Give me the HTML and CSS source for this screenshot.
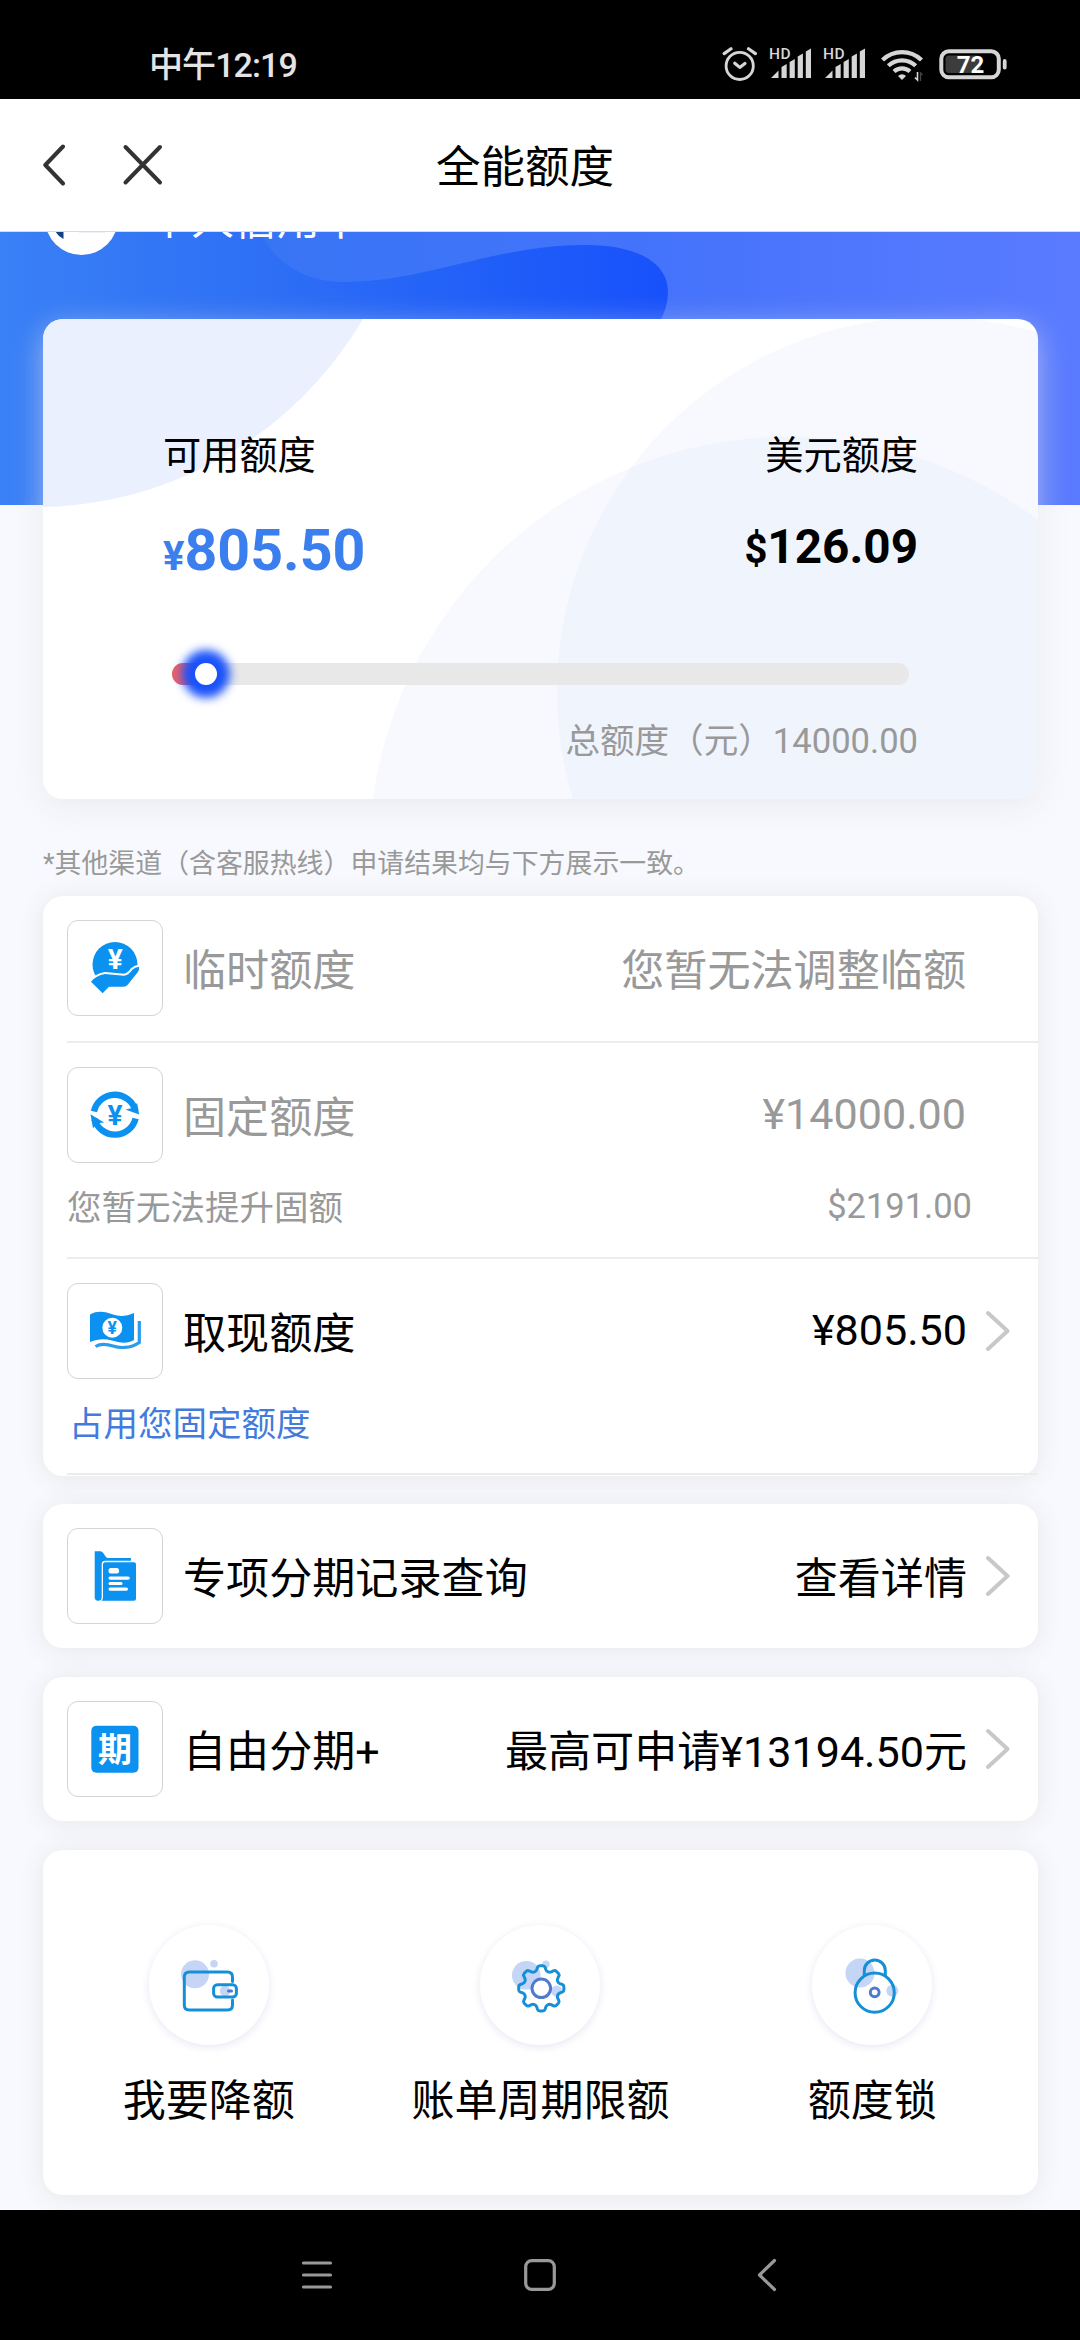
FILE: index.html
```html
<!DOCTYPE html>
<html lang="zh-CN">
<head>
<meta charset="utf-8">
<title>全能额度</title>
<link rel="stylesheet" href="styles.css">
</head>
<body>
<header class="status">
  <span class="clock">中午12:19</span>
  <div class="status-icons">
    <svg class="alarm" width="36" height="40" viewBox="0 0 36 40" fill="none" stroke="#d6d6d6" stroke-width="3.2" stroke-linecap="round" stroke-linejoin="round"><circle cx="17.7" cy="20.9" r="13.6" stroke-width="2.8"/><path d="M2.2 8.6 9 3.8M26.5 3.8 33.4 8.6M12.8 18.2l4.9 4.2 5.2-4"/></svg>
    <svg class="signal" width="42" height="40" viewBox="0 0 42 40" fill="#d6d6d6"><text class="hd" x="-1" y="14">HD</text><path d="M1 33l7.5-7.500V33zM11.500 22l5.200-3v14h-5.200zM19.600 17l5.200-3v19h-5.200zM27.700 11.500l5.200-3V33h-5.200zM35.800 6.500l5.200-3V33h-5.200z"/></svg>
    <svg class="signal" width="42" height="40" viewBox="0 0 42 40" fill="#d6d6d6"><text class="hd" x="-1" y="14">HD</text><path d="M1 33l7.500-7.500V33zM11.500 22l5.200-3v14h-5.200zM19.600 17l5.200-3v19h-5.200zM27.700 11.500l5.200-3V33h-5.200zM35.800 6.500l5.200-3V33h-5.200z"/></svg>
    <svg class="wifi" width="44" height="40" viewBox="0 0 44 40" fill="none" stroke="#d6d6d6" stroke-width="4.300"><path d="M1.500 15a28 28 0 0 1 39 0M7.300 20.800a20 20 0 0 1 27.400 0M13 26.500a12 12 0 0 1 16 0"/><path d="M17 31a5.600 5.600 0 0 1 8 0l-4 4z" fill="#d6d6d6" stroke="none"/><path d="M36.500 27v8l-2.500-2.500" stroke-width="1.600"/><path d="M39.500 36v-8l2 2" stroke="#444" stroke-width="1.400"/></svg>
    <svg class="battery" width="69" height="40" viewBox="0 0 69 40"><rect x="2.300" y="6.300" width="57.500" height="26" rx="7.500" fill="none" stroke="#d6d6d6" stroke-width="4"/><rect x="6.500" y="10.500" width="35" height="17.500" rx="3.500" fill="#3c3c3c"/><rect x="63.800" y="14" width="3.800" height="10.500" rx="1.900" fill="#d6d6d6"/><text class="level" x="31.500" y="28">72</text></svg>
  </div>
</header>
<nav class="titlebar">
  <svg width="24" height="44" viewBox="0 0 24 44" fill="none" stroke="#333" stroke-width="4" stroke-linecap="round" stroke-linejoin="round"><path d="M22 3.500 4.300 22 22 40.500"/></svg>
  <svg width="44" height="44" viewBox="0 0 44 44" fill="none" stroke="#333" stroke-width="4" stroke-linecap="round"><path d="M4.500 4 39 39.500M39 4 4.500 39.500"/></svg>
  <h1 class="title">全能额度</h1>
</nav>
<main class="page">
  <section class="hero">
    <svg class="hero-bg" width="1080" height="273" viewBox="0 0 1080 273">
      <defs>
        <linearGradient id="sky"><stop offset="0" stop-color="#3a80f6"/><stop offset=".25" stop-color="#3875f5"/><stop offset=".6" stop-color="#4473fb"/><stop offset="1" stop-color="#5a7bff"/></linearGradient>
        <linearGradient id="wave"><stop offset="0" stop-color="#3a80f6"/><stop offset=".4" stop-color="#2e6ff5"/><stop offset=".8" stop-color="#1e5bf9"/><stop offset="1" stop-color="#1851fb"/></linearGradient>
      </defs>
      <rect width="1080" height="273" fill="url(#sky)"/>
      <path d="M0 0H260C278 36 310 50 344 50 425 50 495 13 585 13 638 13 668 31 668 60 668 90 640 120 620 140L0 273z" fill="url(#wave)"/>
    </svg>
    <div class="profile">
      <div class="avatar"><svg width="73" height="73" viewBox="0 0 73 73"><path d="M10 48.500h8.500V57q-6-3-8.500-8.500z" fill="#0f4484"/><path d="M34 50.200h26" stroke="#e6ecf5" stroke-width="1"/></svg></div>
      <span>个人信用卡</span>
    </div>
  </section>

  <section class="quota">
    <svg class="quota-bg" width="995" height="480" viewBox="43 319 995 480">
      <rect x="43" y="319" width="995" height="480" fill="#fff"/>
      <circle cx="35" cy="127" r="380" fill="#eaf0fe"/>
      <g fill="#d4dffc" fill-opacity=".18"><circle cx="931" cy="691" r="374"/><circle cx="788" cy="856" r="419"/></g>
    </svg>
    <div class="pair names"><span>可用额度</span><span>美元额度</span></div>
    <div class="pair sums">
      <div class="cny"><small>¥</small>805.50</div>
      <div class="usd"><small>$</small>126.09</div>
    </div>
    <div class="slider"><div class="used"></div><div class="knob"></div></div>
    <p class="total">总额度（元）14000.00</p>
  </section>

  <p class="note">*其他渠道（含客服热线）申请结果均与下方展示一致。</p>

  <section class="card list">
    <div class="row muted">
      <div class="line">
        <div class="ico"><svg width="96" height="96" viewBox="0 0 96 96" fill="#0b91ef"><circle cx="48" cy="44.500" r="22.500"/><path d="M24 61.700Q29 55.500 38 54l19 1.700q4 0 8.600-6.200Q69 46.500 72 47q.500 3-1.300 5.200L60.500 65q-1.500 1.800-3.800 1.800H42l-6.400 6.500z" stroke="#fff" stroke-width="4" paint-order="stroke"/><text class="yen" x="48.300" y="49" font-size="28" fill="#fff">¥</text></svg></div>
        <span class="label">临时额度</span><span class="value han">您暂无法调整临额</span>
      </div>
    </div>
    <div class="row muted">
      <div class="line">
        <div class="ico"><svg width="96" height="96" viewBox="0 0 96 96" fill="none" stroke="#0b91ef" stroke-width="6.400"><path d="M27 44.500a21.300 21.300 0 0 1 41.500-.500M68.600 51.500a21.300 21.300 0 0 1-41.200.500"/><path d="M58.500 42.500l6.800-1.500 4.800-5 2 11.500zM37 55.500l-7 .800-4 5-2.500-14z" fill="#0b91ef" stroke="none"/><text class="yen" x="48" y="58.300" font-size="28" fill="#0b91ef" stroke="none">¥</text></svg></div>
        <span class="label">固定额度</span><span class="value">¥14000.00</span>
      </div>
      <div class="sub"><span>您暂无法提升固额</span><span class="dollar">$2191.00</span></div>
    </div>
    <div class="row">
      <div class="line">
        <div class="ico"><svg width="96" height="96" viewBox="0 0 96 96"><path d="M23 31.500C31 27 39 29 46 31.500S60 33 67 30v27c-7 4.500-15 2.500-22 .500s-14-2-22 1.500z" fill="#0b91ef"/><path d="M28.500 63.500C34 60 40 61 46 63s17 3 26.300-3.500V38" fill="none" stroke="#2a9ceb" stroke-width="3.200"/><circle cx="45.300" cy="44.700" r="10" fill="#fff"/><text class="yen" x="45.300" y="51" font-size="17.500" fill="#0b91ef">¥</text></svg></div>
        <span class="label">取现额度</span><span class="value">¥805.50</span>
        <svg class="more" width="26" height="42" viewBox="0 0 26 42"><path d="M4 3 23.500 21 4 39"/></svg>
      </div>
      <div class="sub blue"><span>占用您固定额度</span></div>
    </div>
  </section>

  <section class="card single">
    <div class="line">
      <div class="ico"><svg width="96" height="96" viewBox="0 0 96 96" fill="#0b91ef"><path d="M27.700 23.300h5.800q1.500 0 2.500 1.500l2.800 4q.800 1.300 2.500 1.300h22.600v2.700H38q-3.300 0-3.300 3.500V69.500q-.300 3.200-3.500 3.200t-3.500-3.200z"/><path d="M38 34.300h29q2 0 2 2v34.400q0 2-2 2H34.500q1.500-1.500 1.500-3.500V36.300q0-2 2-2z"/><g fill="#fff"><rect x="41.500" y="40" width="10.600" height="5.400" rx="2.500"/><rect x="41.500" y="48.500" width="21.300" height="3.200" rx="1.600"/><rect x="41.500" y="54" width="14" height="3" rx="1.500"/><rect x="41.500" y="59.500" width="19.500" height="3.200" rx="1.600"/></g></svg></div>
      <span class="label">专项分期记录查询</span><span class="value han">查看详情</span>
      <svg class="more" width="26" height="42" viewBox="0 0 26 42"><path d="M4 3 23.500 21 4 39"/></svg>
    </div>
  </section>

  <section class="card single">
    <div class="line">
      <div class="ico"><svg width="96" height="96" viewBox="0 0 96 96"><rect x="24.300" y="24.700" width="47.200" height="47" rx="5" fill="#0b91ef"/><text class="qi" x="48" y="61">期</text></svg></div>
      <span class="label">自由分期+</span><span class="value han">最高可申请¥13194.50元</span>
      <svg class="more" width="26" height="42" viewBox="0 0 26 42"><path d="M4 3 23.500 21 4 39"/></svg>
    </div>
  </section>

  <section class="card actions">
    <div class="action">
      <svg class="disc" width="120" height="120" viewBox="0 0 120 120" fill="none" stroke="#1590d8" stroke-width="3" stroke-linecap="round"><g fill="#c5d5f6" stroke="none"><circle cx="46" cy="49.300" r="14"/><circle cx="65" cy="38.700" r="3.800"/><circle cx="76" cy="66" r="5.200"/></g><path d="M83.500 56.500V52q0-5-5-5H40.300q-5 0-5 5v28q0 5 5 5h38.200q5 0 5-5v-5"/><rect x="64.600" y="59.700" width="22.800" height="12.400" rx="3.800"/><path d="M79.500 66h3" stroke="#4a78cc" stroke-width="3"/></svg>
      <span>我要降额</span>
    </div>
    <div class="action">
      <svg class="disc" width="120" height="120" viewBox="0 0 120 120" fill="none" stroke="#1590d8" stroke-width="3" stroke-linejoin="round"><g fill="#c5d5f6" stroke="none"><circle cx="46.300" cy="50.300" r="14.300"/><circle cx="66" cy="39.300" r="3.700"/><circle cx="76.600" cy="66" r="5.500"/></g><g transform="translate(61.300 63.300)"><path d="M-4.600-18.600-3.800-21Q-3.200-22.600-1.500-22.600H1.500Q3.200-22.600 3.800-21L4.600-18.600A4 4 0 0 0 9.900-16.400L12.200-17.500Q13.700-18.200 14.900-17.100L17.100-14.900Q18.200-13.700 17.500-12.200L16.400-9.900A4 4 0 0 0 18.600-4.600L21-3.800Q22.600-3.200 22.600-1.500V1.500Q22.600 3.200 21 3.800L18.600 4.600A4 4 0 0 0 16.400 9.900L17.500 12.200Q18.200 13.700 17.100 14.900L14.900 17.100Q13.700 18.200 12.200 17.500L9.900 16.400A4 4 0 0 0 4.600 18.600L3.800 21Q3.200 22.600 1.500 22.600H-1.500Q-3.200 22.600-3.800 21L-4.600 18.600A4 4 0 0 0-9.900 16.400L-12.200 17.500Q-13.700 18.200-14.900 17.100L-17.100 14.900Q-18.200 13.700-17.500 12.200L-16.400 9.900A4 4 0 0 0-18.600 4.600L-21 3.800Q-22.600 3.200-22.600 1.500V-1.500Q-22.600-3.200-21-3.800L-18.600-4.600A4 4 0 0 0-16.400-9.900L-17.500-12.200Q-18.200-13.700-17.100-14.900L-14.900-17.100Q-13.700-18.200-12.200-17.500L-9.900-16.400A4 4 0 0 0-4.600-18.600z"/><circle r="9.300" fill="#fff" stroke="#5079cf"/></g></svg>
      <span>账单周期限额</span>
    </div>
    <div class="action">
      <svg class="disc" width="120" height="120" viewBox="0 0 120 120" fill="none" stroke="#1590d8" stroke-width="3"><g fill="#c5d5f6" stroke="none"><circle cx="48" cy="48" r="14.500"/><circle cx="80.300" cy="65.700" r="6"/></g><path d="M52.300 51.500V45.500a10.500 10.500 0 0 1 21 0v6"/><circle cx="62.700" cy="67.700" r="19.600"/><circle cx="62.700" cy="67.300" r="4.400" stroke="#5079cf"/></svg>
      <span>额度锁</span>
    </div>
  </section>
</main>
<footer class="keys">
  <svg width="34" height="36" viewBox="0 0 34 36"><path d="M3.500 6h27M3.500 18h27M3.500 30h27"/></svg>
  <svg class="home" width="36" height="36" viewBox="0 0 36 36"><rect x="3.700" y="3.700" width="28.600" height="28.600" rx="6"/></svg>
  <svg width="24" height="36" viewBox="0 0 24 36"><path d="M19.500 3.500 4.500 18l15 14.500"/></svg>
</footer>
</body>
</html>
```

FILE: styles.css
```css
* { box-sizing: border-box; }
body {
  margin: 0;
  width: 1080px;
  height: 2340px;
  display: flex;
  flex-direction: column;
  overflow: hidden;
  background: #000;
  color: #000;
  font-family: Roboto, "Noto Sans CJK SC", sans-serif;
}
p, h1 { margin: 0; }
svg { display: block; flex: none; }
small { font-size: 40px; }

.status {
  height: 99px;
  padding: 0 72px 0 149px;
  display: flex;
  justify-content: space-between;
  align-items: flex-start;
  color: #e4e4e4;
}
.clock { margin-top: 45px; font-size: 34px; line-height: 40px; font-weight: 500; letter-spacing: -.9px; }
.status-icons { display: flex; margin-top: 45px; }
.signal { margin-left: 12px; overflow: visible; }
.wifi { margin-left: 15px; }
.battery { margin-left: 14px; }
.hd { font: 500 15.500px Roboto, sans-serif; letter-spacing: .5px; }
.level { font: 700 24px Roboto, sans-serif; text-anchor: middle; fill: #fff; }

.titlebar {
  height: 133px;
  padding: 0 41px;
  display: grid;
  grid-template-columns: 24px 44px 1fr 98px;
  align-items: center;
  background: #fff;
  border-bottom: 1px solid #d9dce2;
}
.titlebar svg + svg { margin-left: 56px; }
.title { padding-top: 5px; font-size: 44.500px; line-height: 60px; font-weight: 400; text-align: center; }

.page { flex: none; height: 1978px; background: #f8f9fe; overflow: hidden; }
.hero { display: grid; height: 273px; overflow: hidden; }
.hero-bg, .profile { grid-area: 1 / 1; }
.profile {
  display: flex;
  align-items: center;
  height: 73px;
  margin: -50px 0 0 45px;
  gap: 30px;
  z-index: 1;
  color: #fff;
  font-size: 43px;
  line-height: 73px;
}
.avatar { width: 73px; height: 73px; border-radius: 50%; background: #fff; }
.profile span { padding-top: 4px; }

.quota {
  position: relative;
  z-index: 0;
  width: 995px;
  height: 480px;
  margin: -186px 0 0 43px;
  padding: 109px 120px 0;
  border-radius: 20px;
  box-shadow: 0 8px 30px rgba(226, 226, 230, .6);
}
.quota-bg { position: absolute; inset: 0; border-radius: 20px; z-index: -1; }
.pair { display: flex; justify-content: space-between; align-items: baseline; }
.names { font-size: 38.200px; line-height: 56px; }
.sums { height: 80px; margin-top: 27px; font-weight: 700; }
.cny { color: #3b7eee; font-size: 57.300px; line-height: 80px; }
.usd { font-size: 47.700px; line-height: 70px; transform: translateY(-7px); }
.slider {
  display: flex;
  align-items: center;
  width: 737px;
  height: 22px;
  margin: 72px 0 0 9px;
  border-radius: 11px;
  background: #e8e8e8;
}
.used { width: 34px; height: 22px; border-radius: 11px 0 0 11px; background: #e9616b; }
.knob { width: 22px; height: 22px; margin-left: -11px; border-radius: 50%; background: #fff; box-shadow: 0 0 10px 13px #1a52fa; }
.total { margin-top: 33px; font-size: 34.600px; line-height: 46px; text-align: right; color: #999; }

.note { margin: 47px 0 13px 43px; font-size: 26.900px; line-height: 37px; color: #999; }

.card { width: 995px; margin: 0 0 29px 43px; border-radius: 20px; background: #fff; box-shadow: 0 2px 26px #e6e6ea; }
.list { height: 580px; padding-left: 24px; margin-bottom: 28px; }
.row { padding-top: 24px; border-bottom: 2px solid #ececed; }
.row:nth-child(1) { height: 147px; }
.row:nth-child(2) { height: 216px; }
.row:nth-child(3) { height: 216px; }
.line { display: flex; align-items: center; height: 96px; padding-right: 28px; font-size: 43.100px; line-height: 60px; }
.ico { width: 96px; height: 96px; border: 1.500px solid #d4d4d4; border-radius: 11px; }
.ico svg { margin: -1px; }
.label { flex: 1; padding: 7px 0 0 20px; }
.value { margin-right: 44px; }
.value.han { padding-top: 7px; }
.value:has(+ .more) { margin-right: 17px; }
.more { fill: none; stroke: #c8c8c8; stroke-width: 4; stroke-linecap: round; stroke-linejoin: round; }
.muted { color: #999; }
.sub { display: flex; justify-content: space-between; padding: 21px 66px 0 0; font-size: 34.500px; line-height: 48px; }
.dollar { margin-top: -2px; }
.blue { padding-left: 2px; color: #427bdc; }
.yen { font-family: Roboto, sans-serif; font-weight: 700; text-anchor: middle; }
.qi { font: 700 34px "Noto Sans CJK SC", sans-serif; fill: #fff; text-anchor: middle; }
.single { height: 144px; padding: 24px 0 24px 24px; }

.actions { display: grid; grid-template-columns: repeat(3, 1fr); height: 345px; padding-top: 75px; font-size: 43px; line-height: 60px; }
.action { display: flex; flex-direction: column; align-items: center; gap: 26px; }
.disc { border-radius: 50%; box-shadow: 0 2px 9px #e6e6f4; }

.keys { height: 130px; padding: 47px 301px 0 300px; display: flex; justify-content: space-between; }
.keys svg { fill: none; stroke: #999; stroke-width: 3.200; stroke-linecap: round; stroke-linejoin: round; }
.keys .home { margin-right: 9px; }
```
